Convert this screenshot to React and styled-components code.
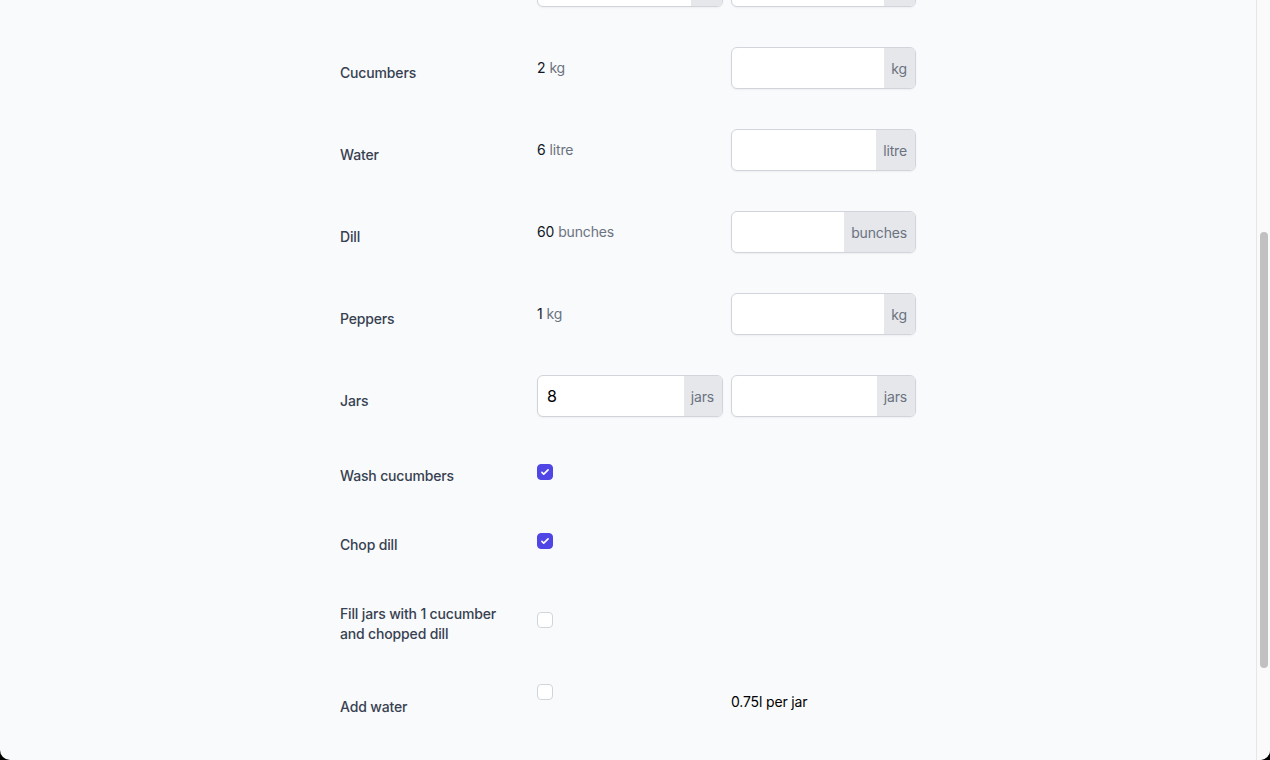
import React from "react";
import styled, { createGlobalStyle } from "styled-components";

const Global = createGlobalStyle`
  html, body { margin: 0; padding: 0; background: #000; }
  body { font-family: Inter, "Noto Sans", "Liberation Sans", sans-serif; -webkit-font-smoothing: antialiased; letter-spacing: -0.01em; }
  * { box-sizing: border-box; }
`;

const Window = styled.div`
  display: flex;
  width: 1270px;
  height: 760px;
  overflow: hidden;
  background: #f9fafb;
  border-radius: 0 0 10px 10px;
`;

const Content = styled.main`
  flex: 1;
  overflow: hidden;
  display: flex;
  justify-content: center;
`;

const Form = styled.div`
  width: 576px;
  margin-top: ${(p) => p.$scroll}px;
  display: flex;
  flex-direction: column;
`;

const Row = styled.div`
  display: grid;
  grid-template-columns: 189px 186px 185px;
  column-gap: 8px;
  align-items: start;
  margin-top: ${(p) => p.$gap}px;
`;

const Label = styled.div`
  padding-top: ${(p) => p.$offset}px;
  padding-right: 16px;
  font-size: 14px;
  line-height: 20px;
  font-weight: 500;
  color: #374151;
`;

const Cell = styled.div`
  padding-top: ${(p) => p.$offset || 0}px;
  display: flex;
  align-items: center;
  min-height: ${(p) => (p.$tall ? 42 : 0)}px;
  font-size: 14px;
  line-height: 20px;
  color: #111827;
`;

const Unit = styled.span`
  color: #6b7280;
  margin-left: 4px;
`;

const InputGroup = styled.div`
  display: flex;
  width: 100%;
  height: 42px;
  border: 1px solid #d1d5db;
  border-radius: 6px;
  background: #fff;
  overflow: hidden;
  box-shadow: 0 1px 2px rgba(0, 0, 0, 0.05);
`;

const Field = styled.input`
  flex: 1;
  min-width: 0;
  border: 0;
  outline: none;
  background: transparent;
  padding: 0 9px;
  font-family: inherit;
  font-size: 16px;
  color: #000;
`;

const Addon = styled.span`
  display: flex;
  align-items: center;
  padding: 0 8px 0 7px;
  background: #e5e7eb;
  color: #6b7280;
  font-size: 14px;
`;

const Box = styled.span`
  display: inline-flex;
  align-items: center;
  justify-content: center;
  width: 16px;
  height: 16px;
  border-radius: 4px;
  border: 1px solid ${(p) => (p.$checked ? "#4f46e5" : "#d1d5db")};
  background: ${(p) => (p.$checked ? "#4f46e5" : "#fff")};
`;

const Note = styled.div`
  padding-top: ${(p) => p.$offset}px;
  font-size: 14px;
  line-height: 20px;
  color: #000;
`;

const Scrollbar = styled.div`
  width: 14px;
  flex: none;
  border-left: 1px solid #e6e6e6;
  background: #fafafa;
  padding: 232px 2px 0 3px;
`;

const Thumb = styled.div`
  width: 8px;
  height: 436px;
  border-radius: 4px;
  background: #c1c1c1;
`;

function Amount({ unit, value = "" }) {
  return (
    <InputGroup>
      <Field defaultValue={value} />
      <Addon>{unit}</Addon>
    </InputGroup>
  );
}

function Check({ checked }) {
  return (
    <Box $checked={checked}>
      {checked && (
        <svg width="16" height="16" viewBox="0 0 16 16" fill="#fff">
          <path d="M12.207 4.793a1 1 0 010 1.414l-5 5a1 1 0 01-1.414 0l-2-2a1 1 0 011.414-1.414L6.5 9.086l4.293-4.293a1 1 0 011.414 0z" />
        </svg>
      )}
    </Box>
  );
}

const ingredients = [
  { name: "Cucumbers", amount: 2, unit: "kg" },
  { name: "Water", amount: 6, unit: "litre" },
  { name: "Dill", amount: 60, unit: "bunches" },
  { name: "Peppers", amount: 1, unit: "kg" },
];

const steps = [
  { name: "Wash cucumbers", checked: true, gap: 47, label: 2, box: 0 },
  { name: "Chop dill", checked: true, gap: 47, label: 2, box: 0 },
  { name: "Fill jars with 1 cucumber and chopped dill", checked: false, gap: 49, label: 0, box: 8 },
  { name: "Add water", checked: false, gap: 40, label: 13, box: 0, note: "0.75l per jar", noteOffset: 8 },
];

export default function App() {
  return (
    <>
      <Global />
      <Window>
        <Content>
          <Form $scroll={-35}>
            <Row $gap={0}>
              <Label $offset={16} />
              <Amount unit="kg" />
              <Amount unit="kg" />
            </Row>
            {ingredients.map((it) => (
              <Row key={it.name} $gap={40}>
                <Label $offset={16}>{it.name}</Label>
                <Cell $tall>
                  {it.amount}
                  <Unit>{it.unit}</Unit>
                </Cell>
                <Amount unit={it.unit} />
              </Row>
            ))}
            <Row $gap={40}>
              <Label $offset={16}>Jars</Label>
              <Amount unit="jars" value="8" />
              <Amount unit="jars" />
            </Row>
            {steps.map((s) => (
              <Row key={s.name} $gap={s.gap}>
                <Label $offset={s.label}>{s.name}</Label>
                <Cell $offset={s.box}>
                  <Check checked={s.checked} />
                </Cell>
                {s.note && <Note $offset={s.noteOffset}>{s.note}</Note>}
              </Row>
            ))}
          </Form>
        </Content>
        <Scrollbar>
          <Thumb />
        </Scrollbar>
      </Window>
    </>
  );
}
